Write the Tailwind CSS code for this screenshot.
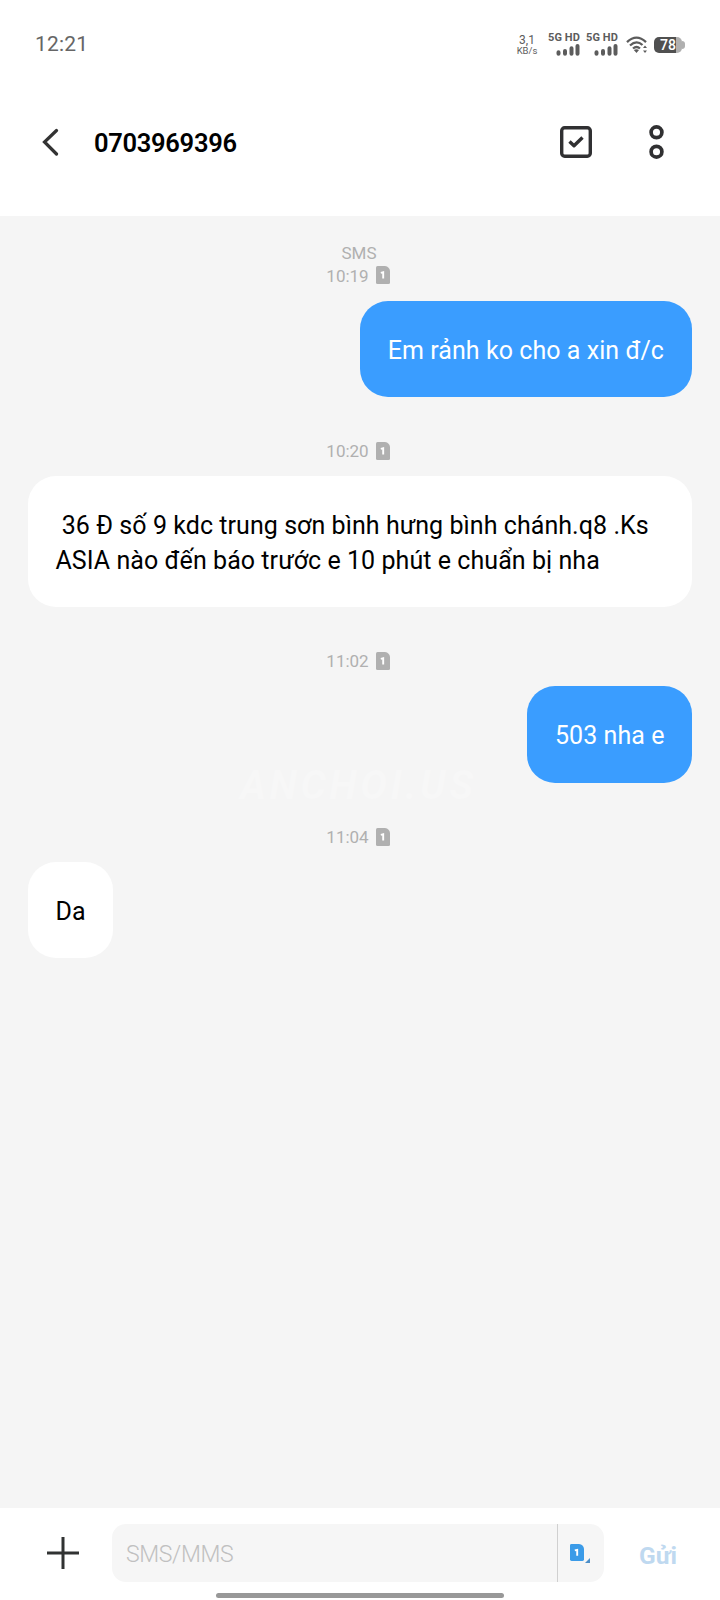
<!DOCTYPE html>
<html lang="vi">
<head>
<meta charset="utf-8">
<title>0703969396</title>
<script src="https://cdn.jsdelivr.net/npm/@tailwindcss/browser@4"></script>
</head>
<body class="bg-white">
<svg class="hidden">
  <symbol id="sim" viewBox="0 0 14 18">
    <path d="M1.5 0H9Q13.500 0.800 14 5V16.5Q14 18 12.500 18H1.5Q0 18 0 16.500V1.500Q0 0 1.500 0Z" fill="currentColor"/>
    <path d="M4.800 6.800L7.200 6.200V12.500" fill="none" stroke="#fff" stroke-width="1.900"/>
  </symbol>
  <symbol id="signal" viewBox="0 0 24 12">
    <path d="M2.500 8.300V9.700M9 7V9.700M15.500 4.300V9.700M21.500 2V9.700" fill="none" stroke="currentColor" stroke-width="4" stroke-linecap="round"/>
  </symbol>
</svg>
<div class="flex h-[1600px] w-[720px] flex-col overflow-hidden bg-white font-['Roboto',sans-serif]">
  <header class="flex h-[216px] shrink-0 flex-col">
    <div class="flex h-[88px] items-center pl-[35px] pr-[35px] text-[#666]">
      <span class="mt-[2px] text-[21px] tracking-[0.2px]">12:21</span>
      <div class="ml-auto flex items-center text-[#5c5c5c]">
        <div class="mr-[9px] flex w-[22px] flex-col items-center pt-[2px] text-[12px] leading-[11px]"><span>3,1</span><span class="text-[9.500px] leading-[10px]">KB/s</span></div>
        <div class="mr-[5px] flex w-[33px] flex-col items-end"><span class="text-[11px] leading-[11px] font-bold tracking-[0.1px] whitespace-nowrap">5G HD</span><svg class="mt-px h-[12px] w-[24px]"><use href="#signal"/></svg></div>
        <div class="mr-[8px] flex w-[33px] flex-col items-end"><span class="text-[11px] leading-[11px] font-bold tracking-[0.1px] whitespace-nowrap">5G HD</span><svg class="mt-px h-[12px] w-[24px]"><use href="#signal"/></svg></div>
        <svg class="mt-[2px] mr-[6px] h-[18px] w-[22px]" viewBox="0 0 22 18" fill="none" stroke="currentColor" stroke-width="2.300">
          <path d="M1 6.200Q10.500 -3 20 6.200M4 9.500Q10.500 3.500 16.500 9M7 12.500Q10.500 9.500 14 12.500"/>
          <path d="M7.800 14Q10.500 12.500 13 14L10.500 17Z" fill="currentColor" stroke="none"/>
          <path d="M19 9.500L21 12H17ZM19 17L21 14.500H17Z" fill="currentColor" stroke="none"/>
        </svg>
        <div class="mt-[2px] flex h-[16px] w-[28px] items-center justify-center rounded-[5px] bg-linear-to-r from-[#505050] from-80% to-[#b0b0b0] to-80% text-[14px] leading-none font-medium text-white">78</div>
        <div class="mt-[2px] h-[8px] w-[3px] rounded-r-full bg-[#b0b0b0]"></div>
      </div>
    </div>
    <div class="flex h-[108px] items-center pl-[42px] pr-[56px]">
      <svg class="h-[28px] w-[17px]" viewBox="0 0 17 28" fill="none" stroke="#333" stroke-width="3.200" stroke-linecap="round"><path d="M14.500 2.500L2.500 14L14.500 26"/></svg>
      <h1 class="mt-[4px] ml-[35px] text-[25.500px] leading-none font-semibold tracking-[-0.3px] text-black">0703969396</h1>
      <svg class="ml-auto h-[32px] w-[32px]" viewBox="0 0 32 32" fill="none" stroke="#303032" stroke-width="3.400"><rect x="1.700" y="1.700" width="28.600" height="28.600" rx="3"/><path d="M9.500 15.500L14 19.800L22.500 11.500" stroke-linejoin="round"/></svg>
      <svg class="ml-[57px] h-[34px] w-[15px]" viewBox="0 0 15 34" fill="none" stroke="#303032" stroke-width="3.700"><circle cx="7.500" cy="7.300" r="5.400"/><circle cx="7.500" cy="26.700" r="5.400"/></svg>
    </div>
  </header>
  <main class="relative flex h-[1292px] shrink-0 flex-col bg-[#f5f5f5] px-[27px] text-[25px] leading-[35px] tracking-[0.06px] text-black">
    <div class="flex h-[85px] flex-col items-center pt-[26px] pr-[2px] text-[17px] leading-[23px] tracking-normal text-[#b0b0b0]">
      <span>SMS</span>
      <div class="flex items-center gap-[7px] pr-[2px]"><span>10:19</span><svg class="-mt-[3px] h-[18px] w-[14px]"><use href="#sim"/></svg></div>
    </div>
    <div class="mr-px h-[96px] self-end rounded-[28px] bg-[#3a9dff] px-[28px] py-[32px] text-white">Em rảnh ko cho a xin đ/c</div>
    <div class="flex h-[79px] items-end justify-center gap-[7px] pr-[4px] pb-[13px] text-[17px] leading-[23px] tracking-normal text-[#b0b0b0]"><span>10:20</span><svg class="mb-[3px] h-[18px] w-[14px]"><use href="#sim"/></svg></div>
    <div class="mr-px ml-px h-[131px] rounded-[28px] bg-white px-[27.500px] py-[32px] whitespace-pre">&nbsp;36 Đ số 9 kdc trung sơn bình hưng bình chánh.q8 .Ks
ASIA nào đến báo trước e 10 phút e chuẩn bị nha</div>
    <div class="flex h-[79px] items-end justify-center gap-[7px] pr-[4px] pb-[13px] text-[17px] leading-[23px] tracking-normal text-[#b0b0b0]"><span>11:02</span><svg class="mb-[3px] h-[18px] w-[14px]"><use href="#sim"/></svg></div>
    <div class="mr-px h-[97px] self-end rounded-[28px] bg-[#3a9dff] px-[27.500px] py-[32px] text-white">503 nha e</div>
    <div class="flex h-[79px] items-end justify-center gap-[7px] pr-[4px] pb-[13px] text-[17px] leading-[23px] tracking-normal text-[#b0b0b0]"><span>11:04</span><svg class="mb-[3px] h-[18px] w-[14px]"><use href="#sim"/></svg></div>
    <div class="ml-px h-[96px] self-start rounded-[28px] bg-white px-[27.500px] py-[32px]">Da</div>
    <div class="absolute top-[550px] left-[240px] text-[40px] leading-[40px] font-bold tracking-[3.500px] text-[#f7f7f7] italic">ANCHOI.US</div>
  </main>
  <footer class="flex flex-1 flex-col">
    <div class="flex h-[90px] items-center">
      <svg class="ml-[47px] h-[32px] w-[32px]" viewBox="0 0 32 32" stroke="#303232" stroke-width="3"><path d="M16 0V32M0 16H32"/></svg>
      <div class="ml-[33px] flex h-[58px] w-[492px] items-stretch rounded-[14px] bg-[#f6f6f6]">
        <span class="flex w-[445px] items-center pt-[4px] pl-[14px] text-[23px] font-light tracking-[-0.350px] text-[#c0c0c0]">SMS/MMS</span>
        <span class="w-px bg-[#d0d0d0]"></span>
        <span class="flex flex-1 items-center pl-[12px] text-[#3b9be8]"><svg class="mb-[2px] h-[17px] w-[14px]" viewBox="0 0 14 18" preserveAspectRatio="none"><use href="#sim" width="14" height="18"/></svg><svg class="mt-[15px] ml-px h-[5px] w-[5px]" viewBox="0 0 5 5"><path d="M5 0V5H0Z" fill="#4d8fc9"/></svg></span>
      </div>
      <span class="mt-[7px] ml-[35px] text-[24.500px] font-bold text-[#bfd9f0]">Gửi</span>
    </div>
    <div class="mt-[-5px] ml-[216px] h-[5px] w-[288px] rounded-full bg-[#989898]"></div>
  </footer>
</div>
</body>
</html>
